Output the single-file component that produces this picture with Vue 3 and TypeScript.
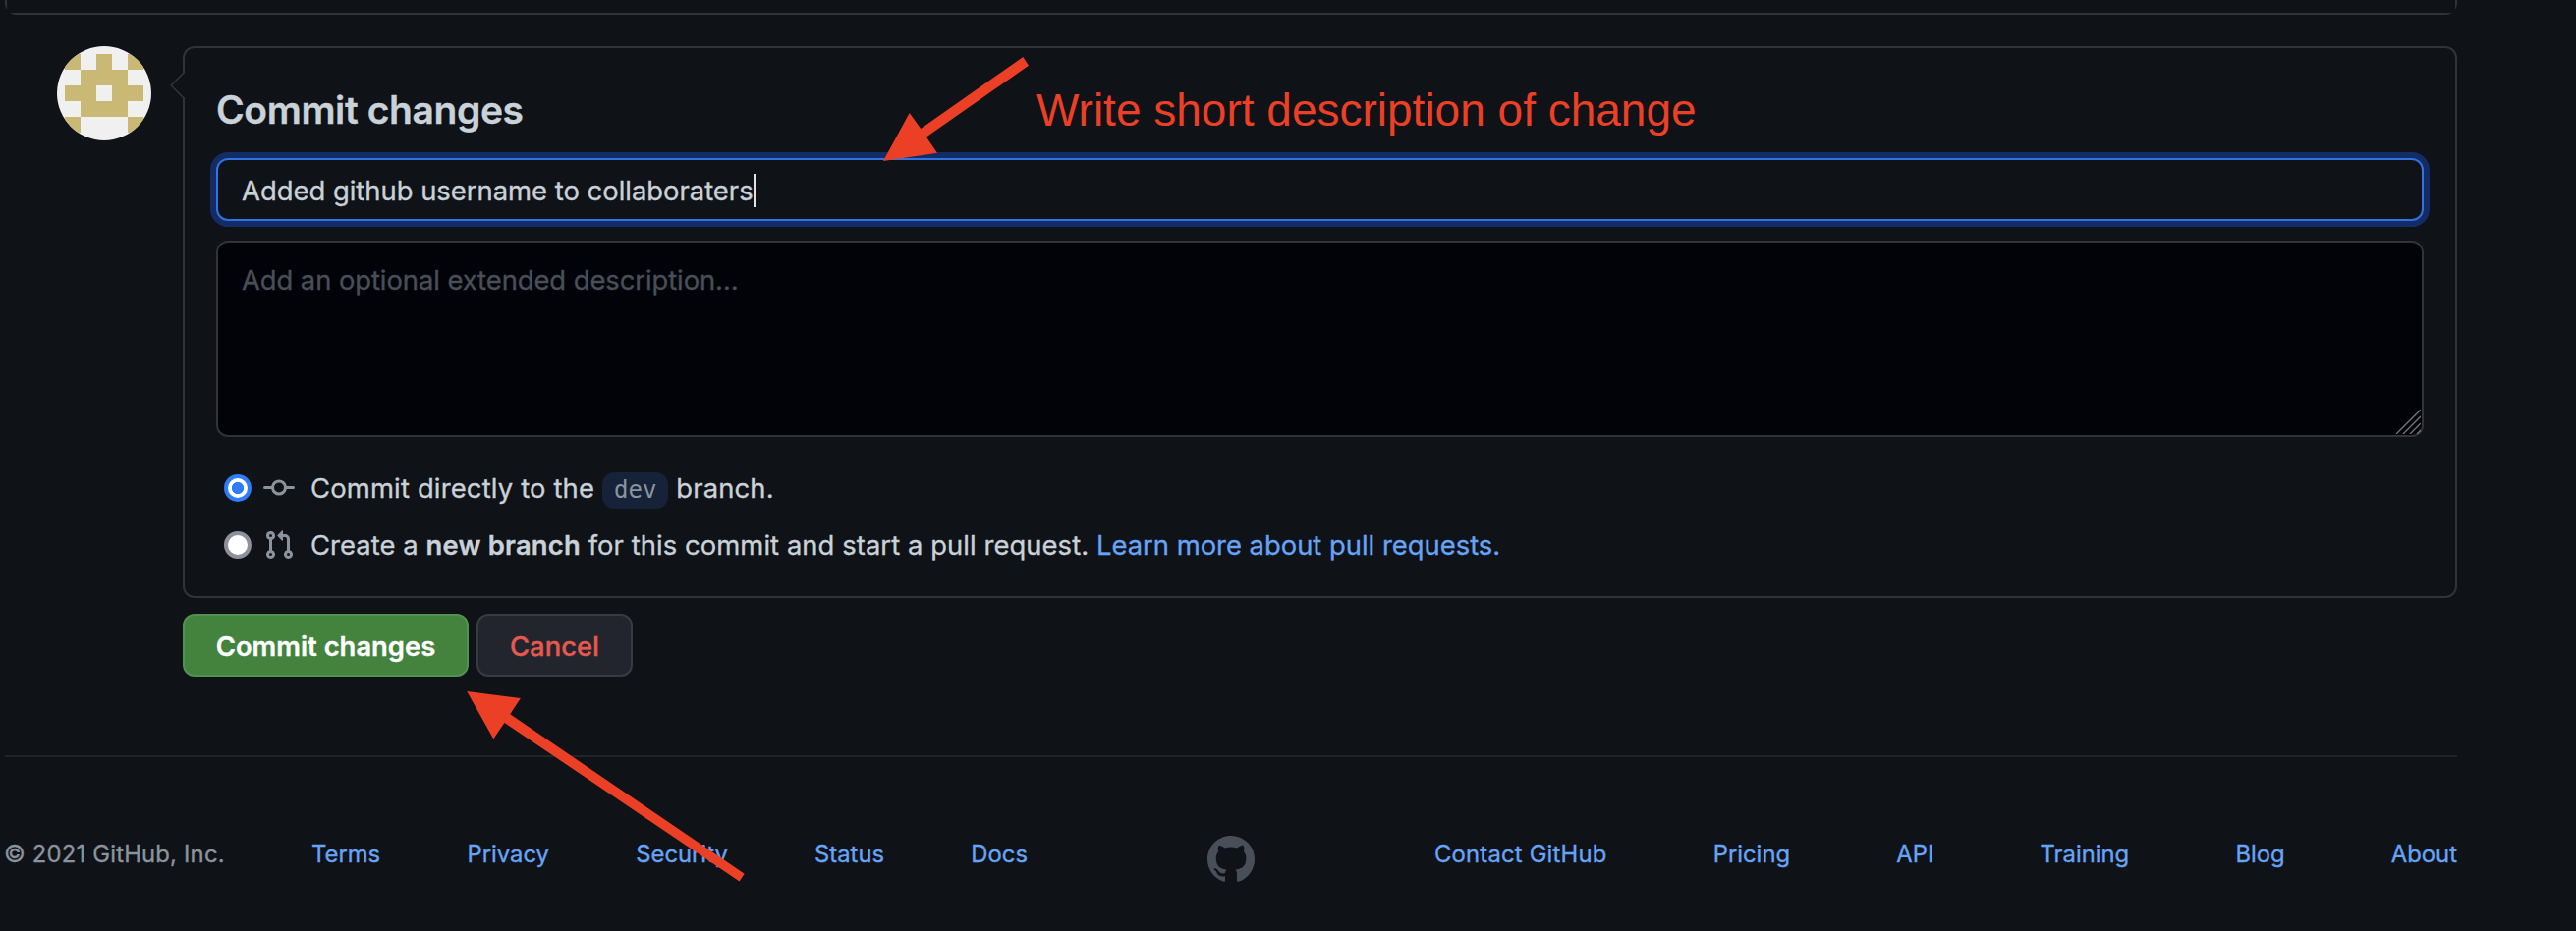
<script setup lang="ts">
const avatarRows: string[] = ['10101', '01110', '11011', '01110', '10001']
const avatarCells = avatarRows.flatMap((row, y) =>
  [...row].flatMap((on, x) => (on === '1' ? [{ x: 8 + x * 16, y: 8 + y * 16 }] : [])),
)

const legalLinks: string[] = ['Terms', 'Privacy', 'Security', 'Status', 'Docs']
const companyLinks: string[] = ['Contact GitHub', 'Pricing', 'API', 'Training', 'Blog', 'About']
</script>

<template>
  <div class="page">
    <div class="container">
      <div class="editor-end"><div class="editor-body"></div></div>

      <div class="commit-row">
        <svg class="avatar" viewBox="0 0 96 96" shape-rendering="crispEdges">
          <rect width="96" height="96" fill="#f0f0f0" />
          <rect v-for="(c, i) in avatarCells" :key="i" :x="c.x" :y="c.y" width="16" height="16" fill="#c9b975" />
        </svg>

        <form class="commit-form" @submit.prevent>
          <section class="commit-box">
            <svg class="caret" viewBox="0 0 16 28">
              <path d="M16 0v28L2 14z" fill="#0f1216" />
              <path d="M15 0L1.2 14 15 28" fill="none" stroke="#303338" stroke-width="1.6" />
            </svg>
            <h3>Commit changes</h3>
            <div class="summary">
              <span class="summary-text">Added github username to collaboraters</span><span class="cursor"></span>
            </div>
            <div class="description">
              <span class="placeholder">Add an optional extended description…</span>
              <svg class="resizer" viewBox="0 0 25 25">
                <path d="M0 25L25 0M7 25L25 7M14 25L25 14M21 25L25 21" stroke="#77797c" stroke-width="1.3" />
              </svg>
            </div>
            <div class="choices">
              <label class="choice">
                <span class="radio checked"></span>
                <svg class="octicon" viewBox="0 0 16 16">
                  <path fill-rule="evenodd" d="M10.5 7.75a2.5 2.5 0 11-5 0 2.5 2.5 0 015 0zm1.43.75a4.002 4.002 0 01-7.86 0H.75a.75.75 0 110-1.5h3.32a4.001 4.001 0 017.86 0h3.32a.75.75 0 110 1.5h-3.32z" />
                </svg>
                <span class="choice-text">Commit directly to the <code>dev</code> branch.</span>
              </label>
              <label class="choice">
                <span class="radio"></span>
                <svg class="octicon" viewBox="0 0 16 16">
                  <path fill-rule="evenodd" d="M7.177 3.073L9.573.677A.25.25 0 0110 .854v4.792a.25.25 0 01-.427.177L7.177 3.427a.25.25 0 010-.354zM3.75 2.5a.75.75 0 100 1.5.75.75 0 000-1.5zm-2.25.75a2.25 2.25 0 113 2.122v5.256a2.251 2.251 0 11-1.5 0V5.372A2.25 2.25 0 011.5 3.25zM11 2.5h-1V4h1a1 1 0 011 1v5.628a2.251 2.251 0 101.5 0V5A2.5 2.5 0 0011 2.5zm1 10.25a.75.75 0 111.5 0 .75.75 0 01-1.5 0zM3.75 12a.75.75 0 100 1.5.75.75 0 000-1.5z" />
                </svg>
                <span class="choice-text second">Create a <strong>new branch</strong> for this commit and start a pull request. <a class="learn">Learn more about pull requests.</a></span>
              </label>
            </div>
          </section>
          <div class="actions">
            <button class="btn primary" type="submit">Commit changes</button>
            <button class="btn danger" type="button">Cancel</button>
          </div>
        </form>
      </div>

      <footer class="footer">
        <ul class="legal">
          <li>© 2021 GitHub, Inc.</li>
          <li v-for="l in legalLinks" :key="l"><a>{{ l }}</a></li>
        </ul>
        <svg class="mark" viewBox="0 0 16 16">
          <path fill-rule="evenodd" d="M8 0C3.58 0 0 3.58 0 8c0 3.54 2.29 6.53 5.47 7.59.4.07.55-.17.55-.38 0-.19-.01-.82-.01-1.49-2.01.37-2.53-.49-2.69-.94-.09-.23-.48-.94-.82-1.13-.28-.15-.68-.52-.01-.53.63-.01 1.08.58 1.23.82.72 1.21 1.87.87 2.33.66.07-.52.28-.87.51-1.07-1.78-.2-3.64-.89-3.64-3.95 0-.87.31-1.59.82-2.15-.08-.2-.36-1.02.08-2.12 0 0 .67-.21 2.2.82.64-.18 1.32-.27 2-.27.68 0 1.36.09 2 .27 1.53-1.04 2.2-.82 2.2-.82.44 1.1.16 1.92.08 2.12.51.56.82 1.27.82 2.15 0 3.07-1.87 3.75-3.65 3.95.29.25.54.73.54 1.48 0 1.07-.01 1.93-.01 2.2 0 .21.15.46.55.38A8.013 8.013 0 0016 8c0-4.42-3.58-8-8-8z" />
        </svg>
        <ul class="company">
          <li v-for="l in companyLinks" :key="l"><a>{{ l }}</a></li>
        </ul>
      </footer>
    </div>

    <!-- red callouts drawn over the page -->
    <svg class="arrows" viewBox="0 0 2622 948">
      <polygon points="899,164 925.7,115 937.2,131 1041.3,58 1047,66.7 942.9,139.5 954,155.7" />
      <polygon points="475.2,703.9 529.9,711 519.2,727.3 757.7,889.7 752.6,897.5 513.4,735.9 502.3,752.6" />
    </svg>
    <p class="note">Write short description of change</p>
  </div>
</template>

<style>
body {
  background: #0f1216;
}
</style>

<style scoped>
.page {
  position: relative;
  width: 2622px;
  height: 948px;
  box-sizing: border-box;
  padding-left: 5px;
  overflow: hidden;
  background: #0f1216;
  color: #c9d1d9;
  font-family: Inter, "Liberation Sans", sans-serif;
  font-size: 27.4px;
  line-height: 42px;
  -webkit-text-stroke-width: 0.35px;
}
.container {
  width: 2496px;
}
.editor-end {
  box-sizing: border-box;
  height: 15px;
  border: 2px solid #303338;
  border-top: 0;
  border-radius: 0 0 12px 12px;
}
.editor-body {
  height: 13px;
  background: #0f1216;
}
.commit-row {
  display: flex;
  align-items: flex-start;
  gap: 32px;
  margin-top: 32px;
  padding-left: 53px;
}
.avatar {
  flex: none;
  width: 96px;
  height: 96px;
  border-radius: 50%;
}
.commit-form {
  flex: 1;
}
.commit-box {
  position: relative;
  box-sizing: border-box;
  height: 562px;
  padding: 33px 32px 0;
  border: 2px solid #303338;
  border-radius: 12px;
}
.caret {
  position: absolute;
  top: 24px;
  left: -15px;
  width: 16px;
  height: 28px;
}
h3 {
  margin: 0 0 19px;
  font-size: 39px;
  font-weight: 600;
  line-height: 60px;
  letter-spacing: -0.4px;
}
.summary {
  display: flex;
  align-items: center;
  box-sizing: border-box;
  height: 64px;
  padding: 2px 24px 0;
  border: 2px solid #3273e4;
  border-radius: 12px;
  box-shadow: 0 0 0 6px #142c66;
}
.cursor {
  width: 2px;
  height: 34px;
  background: #dfe3e8;
}
.description {
  position: relative;
  box-sizing: border-box;
  height: 200px;
  margin-top: 20px;
  padding: 17px 24px;
  border: 2px solid #303338;
  border-radius: 12px;
  background: #010308;
}
.placeholder {
  color: #484f58;
  letter-spacing: -0.07px;
}
.resizer {
  position: absolute;
  right: 1px;
  bottom: 1px;
  width: 25px;
  height: 25px;
}
.choices {
  margin-top: 23px;
  padding-left: 8px;
}
.choice {
  display: flex;
  align-items: center;
  height: 58px;
}
.radio {
  flex: none;
  box-sizing: border-box;
  width: 28px;
  height: 28px;
  margin-right: 12px;
  border: 4px solid #8f8f9d;
  border-radius: 50%;
  background: #fff;
}
.radio.checked {
  border-color: #2f7df6;
  background: radial-gradient(circle, #2f7df6 5.7px, #fff 6.5px);
}
.octicon {
  flex: none;
  width: 32px;
  height: 32px;
  margin-right: 16px;
  fill: #8b949e;
}
.choice-text {
  letter-spacing: 0.17px;
  white-space: nowrap;
}
.choice-text.second {
  letter-spacing: 0.07px;
}
strong {
  font-weight: 600;
  letter-spacing: 0.2px;
}
code {
  display: inline-block;
  padding: 0 12px;
  border-radius: 12px;
  background: #152238;
  color: #8b949e;
  font-family: "DejaVu Sans Mono", monospace;
  font-size: 24px;
  line-height: 37px;
  letter-spacing: 0;
  -webkit-text-stroke-width: 0;
}
a {
  color: #67a4f8;
}
.learn {
  letter-spacing: 0;
}
.actions {
  display: flex;
  gap: 8px;
  margin-top: 16px;
}
.btn {
  box-sizing: border-box;
  height: 64px;
  padding: 1px 0 0;
  border: 2px solid #383b42;
  border-radius: 12px;
  background: #22252d;
  font: 600 27.4px Inter, "Liberation Sans", sans-serif;
}
.primary {
  width: 291px;
  border-color: #519250;
  background: #43833e;
  color: #fff;
}
.danger {
  width: 159px;
  color: #e55a4e;
  font-weight: 500;
}
.footer {
  display: flex;
  justify-content: space-between;
  align-items: flex-start;
  margin-top: 80px;
  padding-top: 80px;
  border-top: 2px solid #212428;
  color: #8b949e;
  font-size: 23.8px;
  line-height: 37px;
}
ul {
  display: flex;
  justify-content: space-between;
  width: 1041px;
  margin: 0;
  padding: 0;
  list-style: none;
}
.legal li:first-child {
  margin-left: -1px;
  letter-spacing: 0.2px;
}
.company li:first-child {
  letter-spacing: 0.2px;
}
.mark {
  width: 48px;
  height: 48px;
  fill: #484f58;
}
.arrows {
  position: absolute;
  inset: 0;
  width: 2622px;
  height: 948px;
  fill: #eb4026;
  pointer-events: none;
}
.note {
  position: absolute;
  top: 84px;
  left: 1055px;
  margin: 0;
  color: #eb4026;
  font-family: "Liberation Sans", Arial, sans-serif;
  font-size: 46px;
  line-height: 56px;
  white-space: nowrap;
  -webkit-text-stroke-width: 0;
}
</style>
